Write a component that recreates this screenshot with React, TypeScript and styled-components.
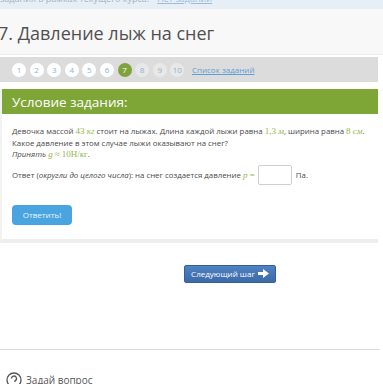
import React from "react";
import styled, { createGlobalStyle } from "styled-components";

const GlobalStyle = createGlobalStyle`
  html, body {
    margin: 0;
    padding: 0;
    background: #ffffff;
    font-family: "Open Sans", "Liberation Sans", sans-serif;
    overflow: hidden;
  }
`;

const pages = ["1", "2", "3", "4", "5", "6", "7", "8", "9", "10"];
const current = "7";

const Pager: React.FC = () => (
  <PagerBar>
    {pages.map((p) => (
      <PageDot key={p} $active={p === current} $faded={Number(p) > 7}>
        {p}
      </PageDot>
    ))}
    <ListLink>Список заданий</ListLink>
  </PagerBar>
);

const Task: React.FC = () => (
  <TaskBox>
    <TaskHeader>Условие задания:</TaskHeader>
    <TaskBody>
      <Para>
        Девочка массой <M>43 <i>кг</i></M> стоит на лыжах. Длина каждой лыжи равна{" "}
        <M>1,3 <i>м</i></M>, ширина равна <M>8 <i>см</i></M>.
        <br />
        Какое давление в этом случае лыжи оказывают на снег?
        <br />
        <em>Принять</em> <M><i>g</i></M> <M>≈</M> <M>10Н/кг</M>.
      </Para>
      <AnswerRow>
        Ответ (<em>округли до целого числа</em>): на снег создается давление{" "}
        <M><i>p</i> =</M>
        <AnswerInput /> Па.
      </AnswerRow>
      <SubmitButton>Ответить!</SubmitButton>
    </TaskBody>
  </TaskBox>
);

const Arrow: React.FC = () => (
  <svg width="11" height="9" viewBox="0 0 11 9" style={{ marginLeft: 3 }}>
    <path d="M0 3h5V0l6 4.5L5 9V6H0z" fill="#ffffff" />
  </svg>
);

const App: React.FC = () => (
  <>
    <GlobalStyle />
    <Page>
      <TopStrip>
        <TopText>задания в рамках текущего курса.</TopText>
        <TopLink>Нет заданий</TopLink>
      </TopStrip>
      <TitleBar>
        <Title>7. Давление лыж на снег</Title>
      </TitleBar>
      <Pager />
      <Task />
      <NextRow>
        <NextButton>
          Следующий шаг <Arrow />
        </NextButton>
      </NextRow>
      <Divider />
      <Footer>
        <FooterIcon>
          <svg width="16" height="16" viewBox="0 0 16 16">
            <circle cx="8" cy="8" r="7" fill="none" stroke="#555" strokeWidth="1.3" />
            <path d="M5.5 6.5a2.5 2.5 0 1 1 3.5 2.3V10" fill="none" stroke="#555" strokeWidth="1.3" />
          </svg>
        </FooterIcon>
        <FooterText>Задай вопрос</FooterText>
      </Footer>
    </Page>
  </>
);

export default App;

const Page = styled.div`
  width: 383px;
  height: 384px;
  overflow: hidden;
  background: #ffffff;
`;

const TopStrip = styled.div`
  height: 9px;
  background: #e6eef6;
  display: flex;
  align-items: flex-start;
  gap: 8px;
  overflow: hidden;
`;

const TopText = styled.span`
  font-size: 9px;
  line-height: 9px;
  color: #a8b2be;
  margin-top: -6px;
  white-space: nowrap;
`;

const TopLink = styled.span`
  font-size: 9px;
  line-height: 9px;
  color: #9dbcdb;
  text-decoration: underline;
  margin-top: -6px;
  white-space: nowrap;
`;

const TitleBar = styled.div`
  height: 45px;
  background: #f8f8f8;
  display: flex;
  align-items: center;
  border-bottom: 1px solid #ececec;
`;

const Title = styled.h1`
  margin: 3px 0 0 -2px;
  font-size: 18px;
  font-weight: 400;
  color: #505050;
`;

const PagerBar = styled.div`
  width: 378px;
  height: 25px;
  background: #dcdcdc;
  display: flex;
  align-items: center;
  gap: 3.6px;
  padding-left: 12px;
  box-sizing: border-box;
  margin-top: 2px;
`;

const PageDot = styled.span<{ $active?: boolean; $faded?: boolean }>`
  width: 14px;
  height: 14px;
  border-radius: 50%;
  background: ${(p) => (p.$active ? "#7ea33a" : p.$faded ? "#e8e8e8" : "#ffffff")};
  color: ${(p) => (p.$active ? "#ffffff" : "#8cb2d6")};
  font-size: 8px;
  display: flex;
  align-items: center;
  justify-content: center;
`;

const ListLink = styled.span`
  margin-left: 4px;
  font-size: 8px;
  color: #5f9fd6;
  text-decoration: underline;
`;

const TaskBox = styled.div`
  width: 378px;
  margin-top: 7px;
  border-left: 2px solid #f2f2f2;
  box-sizing: border-box;
  border-bottom: 4px solid #eeeeee;
`;

const TaskHeader = styled.div`
  height: 25px;
  background: #7ea637;
  color: #ffffff;
  font-size: 13.5px;
  display: flex;
  align-items: center;
  padding-left: 10px;
`;

const TaskBody = styled.div`
  padding: 12px 10px 14px 10px;
  color: #4a4a4a;
  font-size: 7.85px;
`;

const Para = styled.p`
  margin: 0;
  line-height: 11.5px;
  white-space: nowrap;
`;

const M = styled.span`
  font-family: "Liberation Serif", "Times New Roman", serif;
  font-size: 9px;
  color: #92b84a;
`;

const AnswerRow = styled.div`
  margin-top: 4px;
  display: flex;
  align-items: center;
  white-space: pre;
  line-height: 20px;
`;

const AnswerInput = styled.span`
  display: inline-block;
  width: 32px;
  height: 18px;
  border: 1px solid #cfcfcf;
  border-radius: 2px;
  background: #fff;
  margin: 0 2px 0 3px;
`;

const SubmitButton = styled.button`
  margin-top: 20px;
  width: 60px;
  height: 20px;
  border: none;
  border-radius: 4px;
  background: #4aa4e0;
  color: #eaf4fb;
  font-family: "Open Sans", sans-serif;
  font-size: 8px;
  padding: 0;
`;

const NextRow = styled.div`
  display: flex;
  padding-left: 184px;
  margin-top: 22px;
`;

const NextButton = styled.button`
  width: 92px;
  height: 18px;
  border: 1px solid #345f99;
  border-radius: 2px;
  background: linear-gradient(#4f82c2, #3b6aa8);
  color: #ffffff;
  font-family: "Open Sans", sans-serif;
  font-size: 8px;
  display: flex;
  align-items: center;
  justify-content: center;
  padding: 0;
`;

const Divider = styled.div`
  width: 380px;
  height: 1px;
  background: #dedede;
  margin-top: 66px;
`;

const Footer = styled.div`
  display: flex;
  align-items: center;
  gap: 4px;
  padding-left: 6px;
  margin-top: 22px;
`;

const FooterIcon = styled.span`
  display: flex;
`;

const FooterText = styled.span`
  font-size: 10px;
  color: #555;
`;
